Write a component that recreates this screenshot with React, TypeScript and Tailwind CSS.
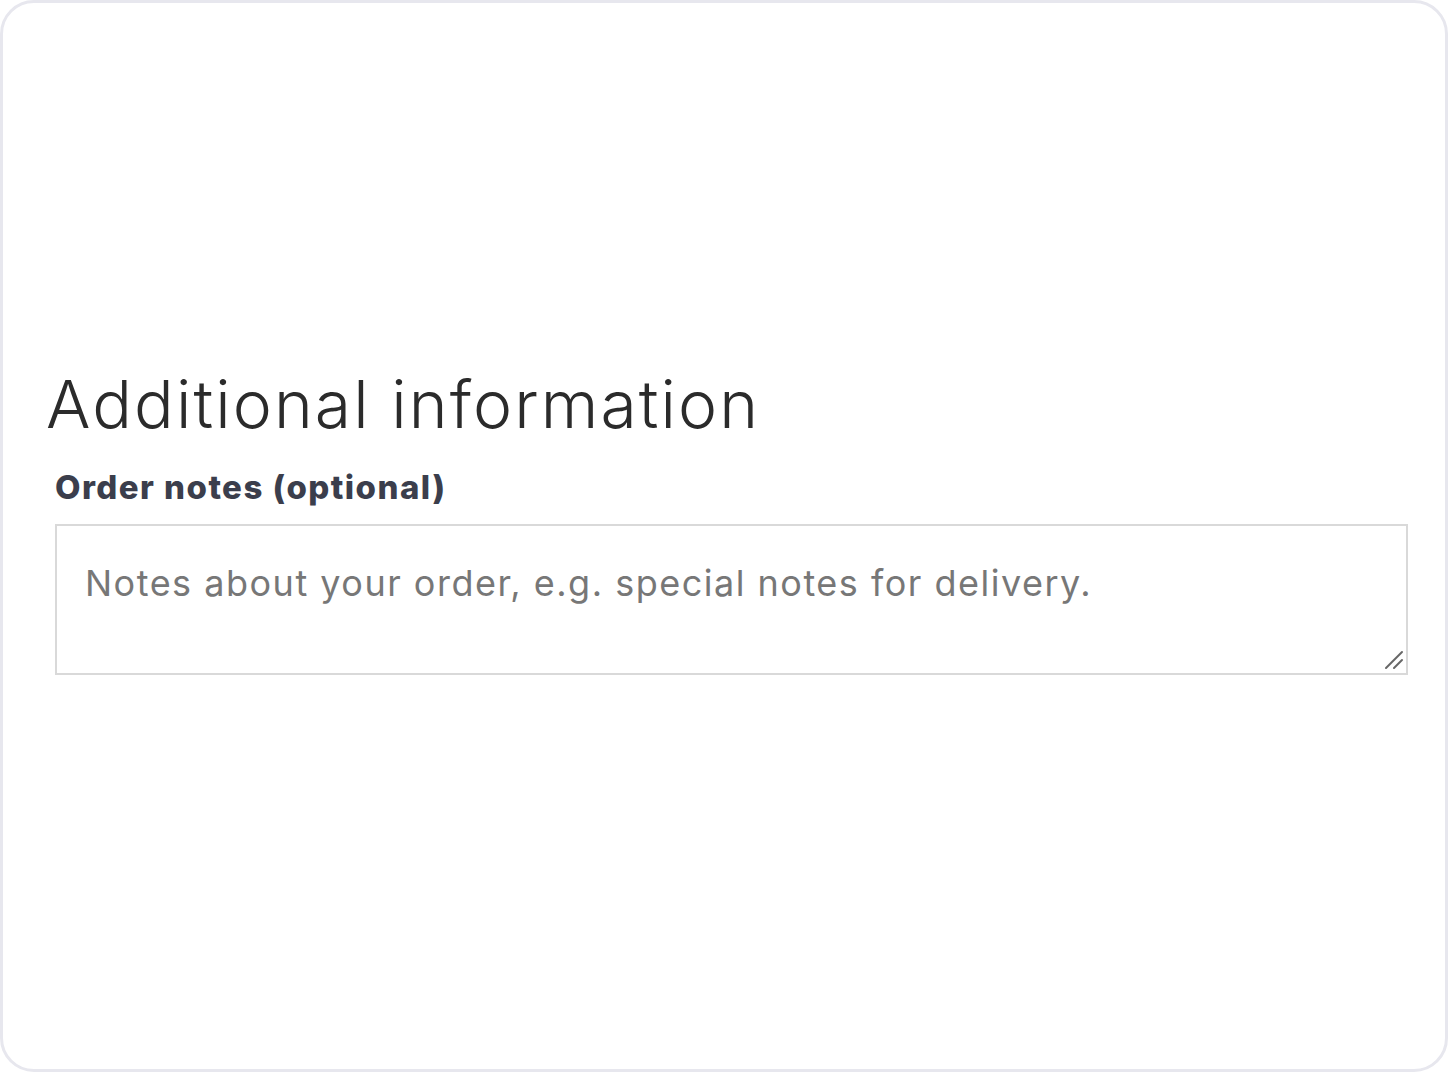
import React from 'react';

const App: React.FC = () => {
  return (
    <div className="w-[1448px] h-[1072px] bg-white">
      <div className="w-full h-full border-[3px] border-[#e7e7ee] rounded-[34px] bg-white pl-[43px] pr-[37px] pt-[368px]">
        {/* Section heading */}
        <h2
          className="text-[66px] font-light text-[#2b2b2b] leading-none tracking-[2.1px]"
          style={{ fontFamily: 'Inter, "Liberation Sans", sans-serif' }}
        >
          Additional information
        </h2>

        <div className="mt-[34px] pl-[9px]" style={{ fontFamily: 'Inter, "Liberation Sans", sans-serif' }}>
          <label className="block text-[33px] font-extrabold text-[#3b3e4c] leading-none tracking-[1.45px] mb-[20px]">
            Order notes (optional)
          </label>
          <div className="relative w-[1353px] h-[151px]">
            <textarea
              className="block w-full h-full resize-none border-2 border-[#d9d9d9] pl-[28px] pt-[35px] text-[36px] leading-[44px] tracking-[1.5px] text-[#555] placeholder:text-[#777] outline-none"
              placeholder="Notes about your order, e.g. special notes for delivery."
            />
            {/* resize grip */}
            <svg
              className="absolute right-[4px] bottom-[5px] pointer-events-none"
              width="20"
              height="20"
              viewBox="0 0 20 20"
            >
              <line x1="2" y1="18" x2="18" y2="2" stroke="#666" strokeWidth="2" strokeLinecap="round" />
              <line x1="10" y1="18" x2="18" y2="10" stroke="#666" strokeWidth="2" strokeLinecap="round" />
            </svg>
          </div>
        </div>
      </div>
    </div>
  );
};

export default App;
